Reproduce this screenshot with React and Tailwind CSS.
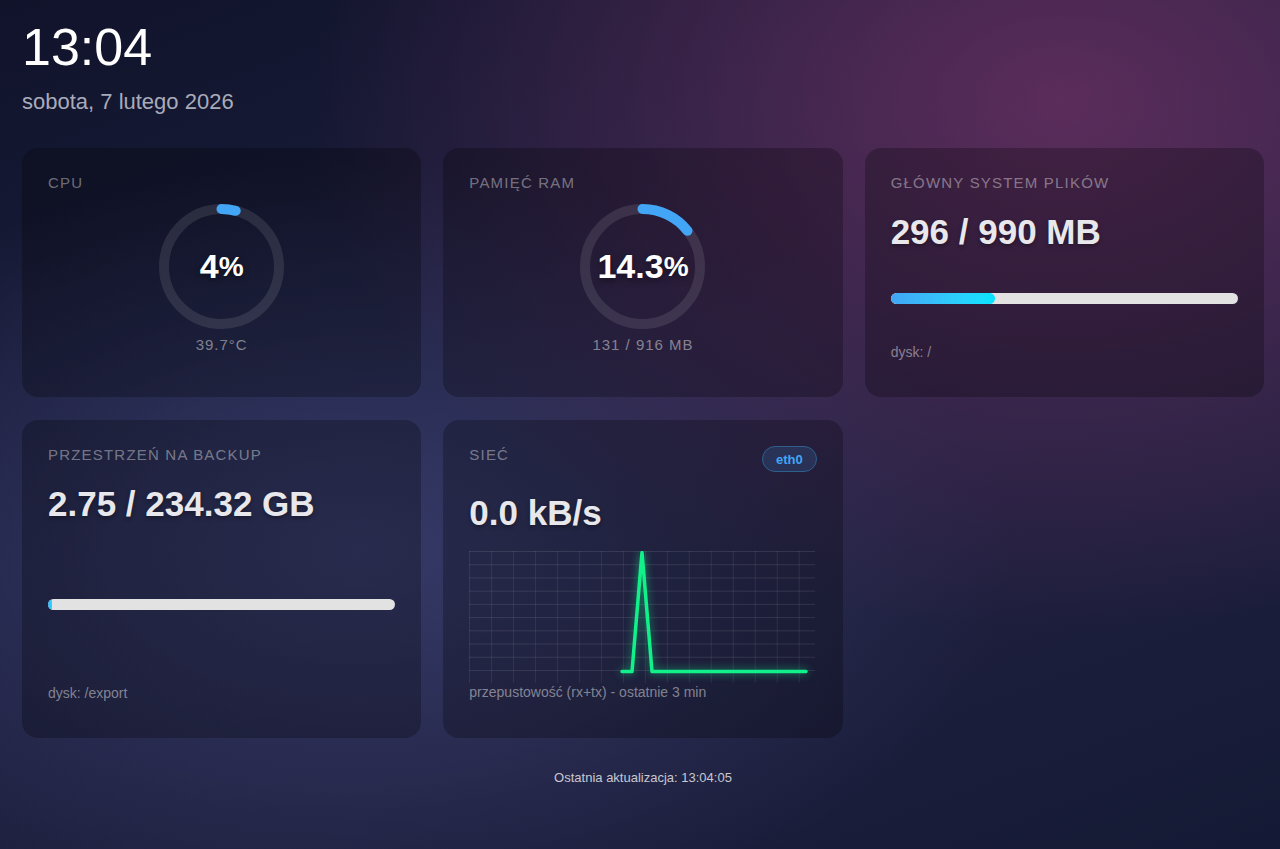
import React from 'react';

const font = "font-['Liberation_Sans',Arial,sans-serif]";

const Label = ({ children }) => (
    <div className="text-[15px] uppercase tracking-[0.08em] text-white/40">{children}</div>
);

const Gauge = ({ label, value, sub }) => {
    const r = 57.5;
    const c = 2 * Math.PI * r;
    return (
        <div className="flex flex-col rounded-[16px] bg-black/25 px-[26px] pt-[26px]">
            <Label>{label}</Label>
            <div className="mt-[13px] flex flex-col items-center">
                <div className="relative h-[125px] w-[125px]">
                    <svg width="125" height="125" viewBox="0 0 125 125" className="-rotate-90">
                        <circle cx="62.5" cy="62.5" r={r} fill="none" stroke="rgba(255,255,255,0.1)" strokeWidth="10" />
                        <circle
                            cx="62.5"
                            cy="62.5"
                            r={r}
                            fill="none"
                            stroke="#42a5f5"
                            strokeWidth="10"
                            strokeLinecap="round"
                            strokeDasharray={c}
                            strokeDashoffset={c * (1 - value / 100)}
                        />
                    </svg>
                    <div className="absolute inset-0 flex items-center justify-center font-bold text-white [text-shadow:0_2px_6px_rgba(0,0,0,0.5)]">
                        <span className="text-[34px]">{value}</span>
                        <span className="text-[28px]">%</span>
                    </div>
                </div>
                <div className="mt-[7px] text-[15px] tracking-[1px] text-white/45">{sub}</div>
            </div>
        </div>
    );
};

const Disk = ({ label, value, pct, footer }) => (
    <div className="flex flex-col justify-between rounded-[16px] bg-black/25 px-[26px] pt-[26px] pb-[37px]">
        <div>
            <Label>{label}</Label>
            <div className="mt-[21px] text-[35px] font-bold text-[#e8e8ec] [text-shadow:0_2px_4px_rgba(0,0,0,0.35)]">{value}</div>
        </div>
        <div className="h-[11px] w-full overflow-hidden rounded-full bg-[#e2e2e2]">
            <div className="h-full rounded-full bg-gradient-to-r from-[#42a5f5] to-[#00e5ff]" style={{ width: `${pct}%` }} />
        </div>
        <div className="text-[14px] text-white/45">{footer}</div>
    </div>
);

const NetChart = () => {
    const rows = Array.from({ length: 10 }, (_, i) => 0.5 + i * 13.22);
    const cols = Array.from({ length: 16 }, (_, i) => 0.5 + i * 21.98);
    return (
        <svg width="346" height="132" viewBox="0 0 346 132" className="block">
            {rows.map((y) => (
                <line key={'h' + y} x1="0" x2="346" y1={y} y2={y} stroke="rgba(255,255,255,0.1)" strokeWidth="1" />
            ))}
            {cols.map((x) => (
                <line key={'v' + x} x1={x} x2={x} y1="0" y2="132" stroke="rgba(255,255,255,0.08)" strokeWidth="1" />
            ))}
            <path
                d="M153 120.5 L163 120.5 L173 1.5 L183 120.5 L337 120.5"
                fill="none"
                stroke="#12f08a"
                strokeWidth="3.5"
                strokeLinecap="round"
                strokeLinejoin="round"
                style={{ filter: 'drop-shadow(0 0 4px rgba(18,240,138,0.6))' }}
            />
        </svg>
    );
};

const Network = () => (
    <div className="flex flex-col rounded-[16px] bg-black/25 px-[26px] pt-[26px] pb-[38px]">
        <div className="flex items-start justify-between">
            <Label>Sieć</Label>
            <span className="flex h-[26px] items-center rounded-full border border-[#2e5f8f] bg-[#42a5f5]/15 px-[13px] text-[13px] font-bold text-[#42a5f5]">
                eth0
            </span>
        </div>
        <div className="mt-[21px] text-[35px] font-bold text-[#e8e8ec] [text-shadow:0_2px_4px_rgba(0,0,0,0.35)]">0.0 kB/s</div>
        <div className="mt-[18px]">
            <NetChart />
        </div>
        <div className="mt-[1px] text-[14px] text-white/45">przepustowość (rx+tx) - ostatnie 3 min</div>
    </div>
);

export default function App() {
    return (
        <div
            className={`${font} min-h-screen w-full leading-[normal] bg-[#1b1d38] bg-[radial-gradient(ellipse_at_83%_12%,rgba(98,46,94,0.9)_0%,rgba(98,46,94,0)_50%),radial-gradient(ellipse_at_28%_65%,rgba(58,62,110,0.85)_0%,rgba(58,62,110,0)_50%),linear-gradient(160deg,#10132a_0%,#1d2040_45%,#1e1f3d_70%,#141a35_100%)] pl-[22px] pr-[16px] pt-[21px] pb-[40px] text-white`}
        >
            <div className="text-[52px] leading-none">13:04</div>
            <div className="mt-[16px] text-[22px] text-[#a9abbb]">sobota, 7 lutego 2026</div>

            <div className="mt-[33px] grid grid-cols-3 grid-rows-[249px_auto] gap-x-[22px] gap-y-[23px]">
                <Gauge label="CPU" value={4} sub="39.7°C" />
                <Gauge label="Pamięć RAM" value={14.3} sub="131 / 916 MB" />
                <Disk label="Główny system plików" value="296 / 990 MB" pct={29.9} footer="dysk: /" />
                <Disk label="Przestrzeń na backup" value="2.75 / 234.32 GB" pct={1.2} footer="dysk: /export" />
                <Network />
            </div>

            <div className="mt-[32px] text-center text-[13px] text-white/75">Ostatnia aktualizacja: 13:04:05</div>
        </div>
    );
}
